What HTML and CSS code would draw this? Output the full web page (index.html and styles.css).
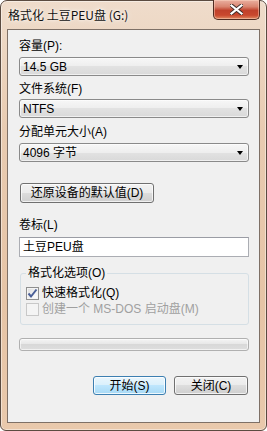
FILE: index.html
```html
<!DOCTYPE html>
<html lang="zh-CN">
<head>
    <meta charset="UTF-8">
    <title>格式化 土豆PEU盘 (G:)</title>
    <link rel="stylesheet" href="styles.css">
</head>
<body>
    <div class="window">
        <div class="titlebar">
            <span class="title">格式化 土豆PEU盘 (G:)</span>
            <div class="close-btn">
                <svg width="13" height="11" viewBox="0 0 13 11">
                    <path d="M1.5 1.5 L11.5 9.5 M11.5 1.5 L1.5 9.5" stroke="#3b2a26" stroke-width="4" stroke-linecap="square"/>
                    <path d="M1.5 1.5 L11.5 9.5 M11.5 1.5 L1.5 9.5" stroke="#ffffff" stroke-width="2.2" stroke-linecap="square"/>
                </svg>
            </div>
        </div>

        <div class="client">
            <div class="label first">容量(P):</div>
            <div class="combo c1">
                <span class="combo-text">14.5 GB</span>
                <span class="arrow"></span>
            </div>

            <div class="label l2">文件系统(F)</div>
            <div class="combo c2">
                <span class="combo-text">NTFS</span>
                <span class="arrow"></span>
            </div>

            <div class="label l3">分配单元大小(A)</div>
            <div class="combo c3">
                <span class="combo-text">4096 字节</span>
                <span class="arrow"></span>
            </div>

            <button class="btn reset-btn">还原设备的默认值(D)</button>

            <div class="label l4">卷标(L)</div>
            <div class="textbox">土豆PEU盘</div>

            <fieldset class="group">
                <legend>格式化选项(O)</legend>
                <div class="check-row">
                    <span class="checkbox">
                        <svg width="11" height="11" viewBox="0 0 11 11">
                            <path d="M1.5 5.5 L4 8.5 L9.5 1.5" stroke="#4a5f97" stroke-width="2" fill="none"/>
                        </svg>
                    </span>
                    <span>快速格式化(Q)</span>
                </div>
                <div class="check-row disabled">
                    <span class="checkbox"></span>
                    <span>创建一个 MS-DOS 启动盘(M)</span>
                </div>
            </fieldset>

            <div class="progress"></div>

            <div class="actions">
                <button class="btn default-btn">开始(S)</button>
                <button class="btn close-action">关闭(C)</button>
            </div>
        </div>
    </div>
</body>
</html>
```

FILE: styles.css
```css
* {
    margin: 0;
    padding: 0;
    box-sizing: border-box;
}

body {
    width: 267px;
    height: 431px;
    background-color: #ffffff;
    font-family: "Liberation Sans", "Noto Sans CJK SC", sans-serif;
    font-size: 12px;
    color: #000000;
}

.window {
    width: 267px;
    height: 431px;
    border: 1px solid #5b4b40;
    border-radius: 7px 7px 6px 6px;
    background: linear-gradient(to bottom, #efdccb 0%, #e8cbb1 30%, #e6c4a6 70%, #e9c9ac 100%);
    box-shadow: inset 0 0 0 1px rgba(255, 255, 255, 0.45);
    padding: 0 6px 7px 6px;
    display: flex;
    flex-direction: column;
}

.titlebar {
    height: 28px;
    display: flex;
    justify-content: space-between;
    align-items: flex-start;
}

.title {
    font-family: "Noto Sans CJK SC", sans-serif;
    font-size: 12px;
    line-height: 14px;
    padding: 7px 0 0 1px;
    color: #111111;
    text-shadow: 0 0 6px rgba(255, 255, 255, 0.9), 0 0 3px rgba(255, 255, 255, 0.9);
}

.close-btn {
    width: 47px;
    height: 20px;
    margin-top: -1px;
    border: 1px solid #4f2c22;
    border-top: none;
    border-radius: 0 0 5px 5px;
    background: linear-gradient(to bottom, #eab0a0 0%, #d98570 35%, #c0412b 55%, #c9482e 80%, #e08a62 100%);
    box-shadow: inset 0 0 0 1px rgba(255, 220, 200, 0.45);
    display: flex;
    align-items: center;
    justify-content: center;
}

.client {
    flex: 1;
    border: 1px solid #7e7066;
    background-color: #f0f0f0;
    padding: 0 10px 0 11px;
    display: flex;
    flex-direction: column;
    align-items: flex-start;
}

.label {
    line-height: 14px;
    height: 14px;
    white-space: nowrap;
}

.label.first { margin-top: 9px; }
.label.l2 { margin-top: 6px; }
.label.l3 { margin-top: 7px; }
.label.l4 { margin-top: 15px; }

.combo {
    width: 230px;
    height: 19px;
    border: 1px solid #8a8a8a;
    border-radius: 3px;
    background: linear-gradient(to bottom, #f7f7f7 0%, #eeeeee 50%, #e2e2e2 50%, #d9d9d9 100%);
    box-shadow: inset 0 0 0 1px rgba(255, 255, 255, 0.6);
    display: flex;
    align-items: center;
    justify-content: space-between;
    padding: 0 5px 0 3px;
}

.combo.c1 { margin-top: 4px; }
.combo.c2 { margin-top: 3px; }
.combo.c3 { margin-top: 4px; }

.combo-text {
    line-height: 14px;
}

.arrow {
    width: 0;
    height: 0;
    border-left: 3.5px solid transparent;
    border-right: 3.5px solid transparent;
    border-top: 4px solid #000000;
}

.btn {
    font-family: "Liberation Sans", "Noto Sans CJK SC", sans-serif;
    font-size: 12px;
    line-height: 14px;
    color: #000000;
    height: 19px;
    border: 1px solid #707070;
    border-radius: 3px;
    background: linear-gradient(to bottom, #f2f2f2 0%, #ebebeb 50%, #dddddd 50%, #cfcfcf 100%);
    box-shadow: inset 0 0 0 1px rgba(255, 255, 255, 0.7);
}

.reset-btn {
    width: 134px;
    height: 20px;
    margin: 21px 0 0 1px;
}

.textbox {
    width: 230px;
    height: 20px;
    margin-top: 5px;
    border: 1px solid #abadb3;
    border-top-color: #9a9ca4;
    background-color: #ffffff;
    line-height: 18px;
    padding-left: 3px;
}

.group {
    width: 229px;
    margin: 9px 0 0 1px;
    border: 1px solid #d5dfe5;
    border-radius: 3px;
    padding: 6px 5px 8px 5px;
}

.group legend {
    padding: 0 2px;
    line-height: 14px;
}

.check-row {
    height: 14px;
    display: flex;
    align-items: center;
    gap: 3px;
    line-height: 14px;
    white-space: nowrap;
}

.check-row + .check-row {
    margin-top: 2px;
}

.checkbox {
    width: 13px;
    height: 13px;
    border: 1px solid #8f8f8f;
    background: linear-gradient(135deg, #dcdcdc 0%, #f7f7f7 70%, #ffffff 100%);
    box-shadow: inset 0 0 0 1px #f4f4f4;
    display: flex;
    align-items: center;
    justify-content: center;
}

.check-row.disabled {
    color: #a0a0a0;
}

.check-row.disabled .checkbox {
    border-color: #c8c8c8;
    background: #f4f4f4;
    box-shadow: none;
}

.progress {
    width: 230px;
    height: 13px;
    margin-top: 13px;
    border: 1px solid #b0b0b0;
    border-radius: 3px;
    background: linear-gradient(to bottom, #f4f4f4 0%, #e6e6e6 50%, #d8d8d8 50%, #dedede 100%);
    box-shadow: inset 0 0 0 1px rgba(255, 255, 255, 0.6);
}

.actions {
    align-self: stretch;
    display: flex;
    justify-content: flex-end;
    gap: 8px;
    margin: 25px 1px 0 0;
}

.default-btn {
    width: 73px;
    border-color: #3c7fb1;
    background: linear-gradient(to bottom, #eaf6fd 0%, #d9f0fc 50%, #bee6fd 50%, #a7d9f5 100%);
    box-shadow: inset 0 0 0 1px rgba(255, 255, 255, 0.8);
}

.close-action {
    width: 74px;
}
```
